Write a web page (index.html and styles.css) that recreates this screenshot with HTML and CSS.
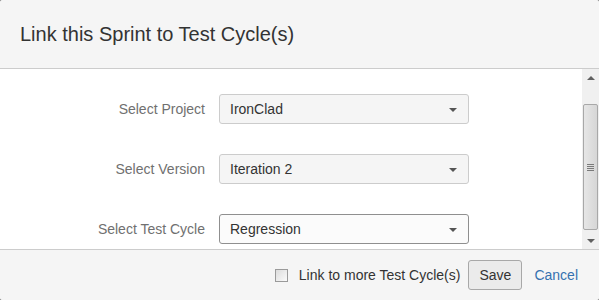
FILE: index.html
```html
<!DOCTYPE html>
<html>
<head>
<meta charset="utf-8">
<link rel="stylesheet" href="styles.css">
</head>
<body>
<div class="dialog">
  <div class="header"><h2 class="title">Link this Sprint to Test Cycle(s)</h2></div>
  <div class="main">
    <div class="content">
      <div class="row">
        <label class="label">Select Project</label>
        <div class="select"><span>IronClad</span><i class="caret"></i></div>
      </div>
      <div class="row">
        <label class="label">Select Version</label>
        <div class="select"><span>Iteration 2</span><i class="caret"></i></div>
      </div>
      <div class="row">
        <label class="label">Select Test Cycle</label>
        <div class="select active"><span>Regression</span><i class="caret"></i></div>
      </div>
    </div>
    <div class="scrollbar">
      <div class="arrow"><i class="up"></i></div>
      <div class="track">
        <div class="thumb"><div class="grip"><b></b><b></b><b></b><b></b></div></div>
      </div>
      <div class="arrow"><i class="down"></i></div>
    </div>
  </div>
  <div class="footer">
    <span class="checkbox"></span>
    <span class="check-label">Link to more Test Cycle(s)</span>
    <button class="save">Save</button>
    <a class="cancel">Cancel</a>
  </div>
</div>
</body>
</html>
```

FILE: styles.css
```css
html, body {
  margin: 0;
  padding: 0;
  background: #8a8a8a;
}
body {
  font-family: "Liberation Sans", Arial, sans-serif;
}
.dialog {
  width: 599px;
  height: 300px;
  background: #fff;
  border-radius: 3px;
  overflow: hidden;
  display: flex;
  flex-direction: column;
}
.header {
  height: 68px;
  background: #f5f5f5;
  border-bottom: 1px solid #cccccc;
  padding-left: 20px;
  flex: none;
}
.title {
  margin: 0;
  font-size: 20px;
  font-weight: normal;
  line-height: 68px;
  color: #333;
}
.main {
  height: 180px;
  display: flex;
  flex: none;
}
.content {
  flex: 1;
  padding-top: 25px;
  display: flex;
  flex-direction: column;
  gap: 30px;
}
.row {
  display: flex;
  align-items: center;
  height: 30px;
}
.label {
  width: 205px;
  text-align: right;
  font-size: 14px;
  color: #707070;
  margin-right: 14px;
}
.select {
  box-sizing: border-box;
  width: 250px;
  height: 30px;
  border: 1px solid #cccccc;
  border-radius: 3px;
  background: #f5f5f5;
  display: flex;
  align-items: center;
  justify-content: space-between;
  padding: 0 11px 0 10px;
  font-size: 14px;
  color: #333;
}
.select.active {
  border-color: #8f8f8f;
  background: #fbfbfb;
}
.caret {
  width: 0;
  height: 0;
  border-left: 4px solid transparent;
  border-right: 4px solid transparent;
  border-top: 4px solid #555;
  margin-top: 1px;
}
.scrollbar {
  width: 17px;
  display: flex;
  flex-direction: column;
  background: #f0f0f0;
  flex: none;
}
.arrow {
  height: 17px;
  display: flex;
  align-items: center;
  justify-content: center;
}
.up, .down {
  width: 0;
  height: 0;
  border-left: 4px solid transparent;
  border-right: 4px solid transparent;
}
.up { border-bottom: 4px solid #606060; }
.down { border-top: 4px solid #606060; }
.track {
  flex: 1;
  padding: 18px 1px 2px 1px;
}
.thumb {
  box-sizing: border-box;
  height: 126px;
  border: 1px solid #a8a8a8;
  border-radius: 2px;
  background: linear-gradient(to right, #e6e6e6, #d6d6d6);
  display: flex;
  align-items: center;
  justify-content: center;
}
.grip {
  display: flex;
  flex-direction: column;
  gap: 1px;
}
.grip b {
  display: block;
  width: 7px;
  height: 1px;
  background: #7a7a7a;
}
.footer {
  flex: 1;
  background: #f5f5f5;
  border-top: 1px solid #cccccc;
  display: flex;
  align-items: center;
  justify-content: flex-end;
  padding-right: 21px;
}
.checkbox {
  box-sizing: border-box;
  width: 13px;
  height: 13px;
  border: 1px solid #9a9a9a;
  background: linear-gradient(135deg, #dcdcdc, #fafafa);
  margin-right: 11px;
}
.check-label {
  font-size: 14px;
  color: #333;
  margin-right: 8px;
}
.save {
  box-sizing: border-box;
  width: 54px;
  height: 30px;
  border: 1px solid #a8a8a8;
  border-radius: 3px;
  background: #ebebeb;
  font-family: "Liberation Sans", Arial, sans-serif;
  font-size: 14px;
  color: #333;
  padding: 0;
  margin-right: 12px;
}
.cancel {
  font-size: 14px;
  color: #3572b0;
}
```
